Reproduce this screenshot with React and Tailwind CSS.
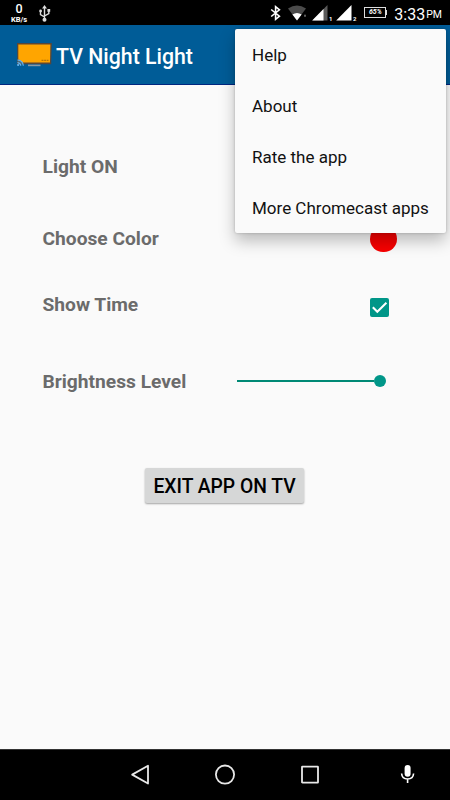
import React, { useState } from 'react';

const menuItems = ['Help', 'About', 'Rate the app', 'More Chromecast apps'];

const BluetoothIcon = () => (
  <svg width="12" height="16" viewBox="0 0 12 16" fill="none" stroke="#fff" strokeWidth="1.6">
    <path d="M1.2 4.5 9.4 11.2 5.6 14.3V1.7L9.4 4.8 1.2 11.5" />
  </svg>
);

const WifiIcon = () => (
  <svg width="20" height="16" viewBox="0 0 20 16">
    <path d="M0 3.6Q9 -2.8 18 3.6L9 15.5Z" fill="#4b4b4b" />
    <path d="M4.4 9.6Q9 6.6 13.6 9.6L9 15.5Z" fill="#fff" />
    <path d="M16 11.5h2l-1-2.5z" fill="#999" />
  </svg>
);

const SignalIcon = ({ partial, label }) => (
  <svg width="21" height="16" viewBox="0 0 21 16">
    <path d="M15.5 0V15.5H.2Z" fill={partial ? '#5a5a5a' : '#fff'} />
    {partial && <path d="M11.5 4V15.5H.2Z" fill="#fff" />}
    <text x="17" y="15.5" fill="#fff" fontSize="6" fontWeight="700" fontFamily="Roboto, sans-serif">{label}</text>
  </svg>
);

const UsbIcon = () => (
  <svg width="12" height="17" viewBox="0 0 12 17" fill="none" stroke="#ddd" strokeWidth="1.4">
    <path d="M5.5 3v11M5.5 12 1.5 9.5V6M5.5 11 9.8 8.5V5" />
    <path d="M5.5 0 8 3.6H3Z" fill="#ddd" stroke="none" />
    <circle cx="5.5" cy="14.7" r="2" fill="#ddd" stroke="none" />
    <circle cx="1.6" cy="6" r="1.4" fill="#ddd" stroke="none" />
    <path d="M8.4 4h2.8v2.8H8.4z" fill="#ddd" stroke="none" />
  </svg>
);

const TvLogo = () => (
  <svg width="35" height="25" viewBox="0 0 35 25">
    <path d="M0 0H34.8L34.2 21.2H.3Z" fill="#594638" />
    <path d="M1.3 1.5H33.4L33 19.6H1.3Z" fill="#ffa500" />
    <path d="M11 21.6H23.5V23.2H11Z" fill="#8998a4" />
    <path d="M24.5 17.3H31.5" stroke="#8d5c07" strokeWidth=".8" strokeDasharray="2 .6" />
    <path d="M.6 16.8H2.5Q5.5 18.5 6.5 21.5H.6Z" fill="#526b79" />
    <g fill="none" stroke="#66b7f4" strokeWidth="1.1">
      <path d="M.5 17Q6 17.5 6.3 22.8M.5 19.5Q3.6 20 3.8 22.8" />
      <circle cx="1.1" cy="22" r=".5" />
    </g>
  </svg>
);

const StatusBar = () => (
  <div className="flex h-[25px] shrink-0 items-center bg-black text-white">
    <div className="ml-[9px] flex w-[20px] flex-col items-center font-medium">
      <span className="text-[12.5px] leading-[13px]">0</span>
      <span className="text-[7.5px] font-bold leading-[9px]">KB/s</span>
    </div>
    <div className="ml-[10px] mt-[1px]"><UsbIcon /></div>
    <div className="ml-auto flex items-center pr-[8px]">
      <BluetoothIcon />
      <div className="ml-[6px]"><WifiIcon /></div>
      <div className="ml-[4px]"><SignalIcon partial label="1" /></div>
      <div className="ml-[3px]"><SignalIcon label="2" /></div>
      <div className="ml-[7px] flex h-[11px] w-[22px] items-center justify-center border border-[#ddd] text-[7px] font-bold italic leading-none">
        65%
      </div>
      <div className="h-[5px] w-px bg-[#ddd]" />
      <span className="ml-[7px] mt-[4px] text-[16px] leading-none">3:33</span>
      <span className="ml-[1px] mt-[6px] text-[10.5px] leading-none">PM</span>
    </div>
  </div>
);

const SettingRow = ({ label, className, children }) => (
  <div className={`flex items-center pl-[42.5px] ${className}`}>
    <span className="-mt-px w-[194px] text-[19.2px] font-bold leading-none text-[#6b6b6b]">{label}</span>
    {children}
  </div>
);

const NavigationBar = () => (
  <nav className="flex h-[51px] shrink-0 items-center border-t border-[#333] bg-black pl-[131px]">
    <svg width="19" height="22" viewBox="0 0 19 22" fill="none" stroke="#e8e8e8" strokeWidth="1.8">
      <path d="M17 1.8V19.5L1.2 10.6Z" strokeLinejoin="round" />
    </svg>
    <svg className="ml-[64px]" width="22" height="22" viewBox="0 0 22 22" fill="none" stroke="#e8e8e8" strokeWidth="1.8">
      <circle cx="11" cy="10.6" r="9.1" />
    </svg>
    <svg className="ml-[64px]" width="20" height="20" viewBox="0 0 20 20" fill="none" stroke="#e8e8e8" strokeWidth="1.8">
      <rect x="2" y="1.6" width="16" height="16" rx=".4" />
    </svg>
    <svg className="ml-[80px] mb-[2px]" width="15" height="20" viewBox="0 0 15 20">
      <rect x="4.6" y="1" width="6" height="11.7" rx="3" fill="#fff" />
      <path d="M1.6 9.5Q2 15 7.6 15T13.6 9.5M7.6 15v4" fill="none" stroke="#fff" strokeWidth="1.6" />
    </svg>
  </nav>
);

const App = () => {
  const [showTime, setShowTime] = useState(true);

  return (
    <div className="relative flex h-[800px] w-[450px] flex-col overflow-hidden bg-[#fafafa] font-[Roboto,sans-serif]">
      <StatusBar />

      <header className="flex h-[60px] shrink-0 items-center border-b border-[#00267f] bg-[#005c97] pl-[16.5px]">
        <div className="mt-[2px]"><TvLogo /></div>
        <h1 className="ml-[4.5px] mt-[4px] text-[21.3px] font-medium leading-none text-white">TV Night Light</h1>
      </header>

      <main className="flex flex-1 flex-col pt-[66px]">
        <SettingRow label="Light ON" className="h-[32px]" />

        <SettingRow label="Choose Color" className="mt-[40px] h-[32px]">
          <button aria-label="Choose Color" className="ml-[133.5px] size-[26.5px] rounded-full bg-[#f80000]" />
        </SettingRow>

        <SettingRow label="Show Time" className="mt-[34px] h-[32px]">
          <button
            role="checkbox"
            aria-checked={showTime}
            aria-label="Show Time"
            onClick={() => setShowTime(!showTime)}
            className="ml-[133.5px] mt-[5px] flex size-[19px] items-center justify-center rounded-[2px] bg-[#009688]"
          >
            {showTime && (
              <svg width="17" height="17" viewBox="0 0 17 17" fill="none" stroke="#fff" strokeWidth="2">
                <path d="M1.8 8.3 6.3 12.8 15.4 3.8" />
              </svg>
            )}
          </button>
        </SettingRow>

        <SettingRow label="Brightness Level" className="mt-[45px] h-[32px]">
          <div className="-mt-[2px] ml-[0.5px] flex items-center">
            <div className="h-[2px] w-[137px] bg-[#008975]" />
            <div className="-ml-[0.5px] size-[12.5px] rounded-full bg-[#009688]" />
          </div>
        </SettingRow>

        <button className="ml-[145px] mt-[70px] h-[35px] w-[159px] whitespace-nowrap rounded-[2px] bg-[#d6d7d7] pt-[3px] text-[19.3px] font-medium leading-none text-black shadow-[0_1px_2px_rgba(0,0,0,0.35)]">
          EXIT APP ON TV
        </button>
      </main>

      <NavigationBar />

      {/* Overflow menu */}
      <div className="absolute left-[234.5px] top-[29px] flex h-[204px] w-[211.5px] flex-col rounded-[2px] bg-[#fafafa] shadow-[0_8px_16px_rgba(0,0,0,0.25),0_0_3px_rgba(0,0,0,0.22)]">
        {menuItems.map((item) => (
          <button key={item} className="flex h-[51px] shrink-0 items-center pl-[17.5px] pt-[2px] text-left text-[17px] leading-none text-[#111]">
            {item}
          </button>
        ))}
      </div>
    </div>
  );
};

export default App;
